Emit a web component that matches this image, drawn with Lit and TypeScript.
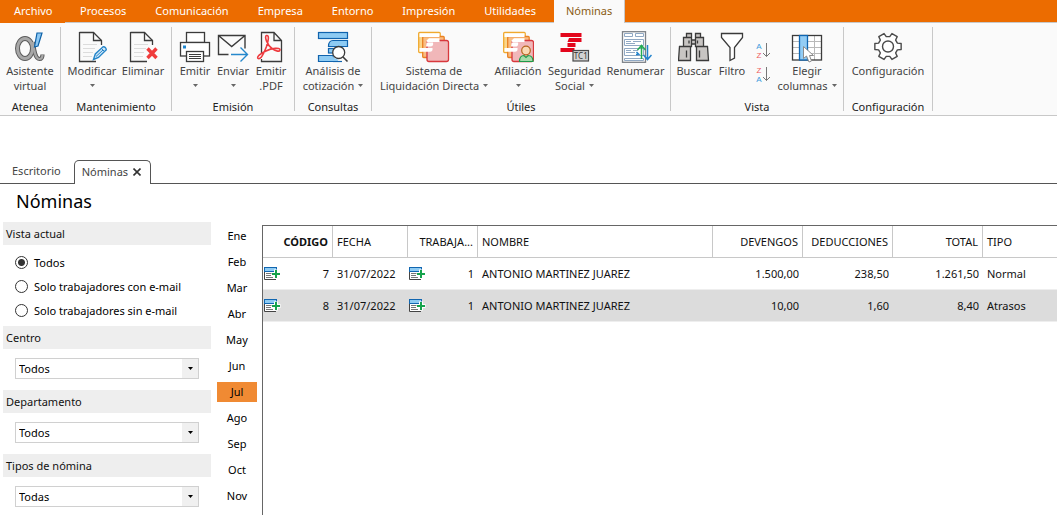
import { LitElement, html, svg, css, nothing, TemplateResult } from "lit";
import { customElement, property, state } from "lit/decorators.js";
import { classMap } from "lit/directives/class-map.js";

/* ---------- icons ---------- */

const ink = "#3b3b3b";
const page = svg`
  <path d="M3.5 1.5H17.5L25.5 9.5V14M3.5 1V30.5H20" fill="none" stroke=${ink} stroke-width="1.3"/>
  <path d="M17.5 1.5V9.5H25.5" fill="none" stroke=${ink} stroke-width="1.3"/>
  <path d="M7 13.5H21M7 17.5H19M7 21.5H17M7 25.5H16" stroke="#dcdcdc"/>`;

const cards = svg`
  <rect x=".7" y="1.5" width="21.5" height="20" rx="1" fill="#fbd68a" stroke="#f0a92e" stroke-width="1.3"/>
  <rect x="4.7" y="5.5" width="21.5" height="21" rx="1" fill="#f9bd83" stroke="#ea8122" stroke-width="1.3"/>
  <rect x="9" y="9.5" width="21.5" height="21" rx="2" fill="#f1b7b9" stroke="#d8383d" stroke-width="1.3"/>
  <path d="M1.5 2.2H21.5V6H1.5ZM11 7.2H21.5V11H10Q8 11 8.500 9.500ZM8.500 11.500H15Q16 15.500 12 15.500H8ZM1.500 17H14.500Q15 20.800 12 20.800H1.500Z" fill="#fff"/>`;

function gearPath(cx: number, cy: number): string {
  const out: string[] = [];
  const ring: [number, number][] = [[-20, 10], [-13, 13.5], [13, 13.5], [20, 10]];
  for (let t = 0; t < 6; t++) {
    for (const [deg, r] of ring) {
      const a = ((t * 60 + deg) * Math.PI) / 180;
      out.push(`${(cx + r * Math.cos(a)).toFixed(2)} ${(cy + r * Math.sin(a)).toFixed(2)}`);
    }
  }
  return "M" + out.join("L") + "Z";
}

const alphaStroke = "M19 11C20 19 21 28 25.5 28C28 28 28.500 26 28.500 23.500";

const icons: Record<string, TemplateResult> = {
  alpha: svg`
    <g fill="none" stroke="#5c5c5c">
      <ellipse cx="11" cy="17.500" rx="7.500" ry="10" stroke-width="5"/>
      <path d=${alphaStroke} stroke-width="4.200"/>
    </g>
    <g fill="none" stroke="#a8a8a8">
      <ellipse cx="11" cy="17.500" rx="7.500" ry="10" stroke-width="3"/>
      <path d=${alphaStroke} stroke-width="2.200"/>
    </g>
    <path d="M23 2H28L24 15L20.500 16Z" fill="#8cc8f4" stroke="#0f62a8" stroke-width="1.200"/>`,
  edit: svg`${page}
    <path d="M17.500 28.500L19.300 23L27 15.800Q30 15.500 30.300 18.800L22.500 26.500Z" fill="#cde6f8" stroke="#2585c9" stroke-width="1.400"/>
    <path d="M25.500 17.500L28.500 20.500M20 25.500L27 19" stroke="#2585c9" fill="none"/>`,
  remove: svg`${page}<path d="M20.500 17.500L29.500 27M29.500 17.500L20.500 27" stroke="#f03c3c" stroke-width="3.400"/>`,
  printer: svg`
    <g fill="#fff" stroke=${ink} stroke-width="1.300">
      <rect x="7.500" y="1.500" width="18" height="10"/>
      <rect x="1.500" y="11.500" width="29" height="13.500"/>
      <rect x="7.500" y="20.500" width="17" height="10"/>
      <path d="M10 23.500H22M10 25.500H22M10 27.500H22" stroke-width="1"/>
    </g>
    <rect x="4" y="14.500" width="3" height="3" fill="#1e86cf"/>`,
  send: svg`
    <path d="M11.500 23.500H1.500V4.500H28V17.500M1.500 4.500L14.700 15.500L28 4.500" fill="none" stroke=${ink} stroke-width="1.400"/>
    <path d="M14 23.500H30M23.500 16.500L30.500 23.500L23.500 30.500" fill="none" stroke="#2688cc" stroke-width="1.400"/>`,
  pdf: svg`
    <path d="M6.500 22V1.500H19L26.500 9.500V30.500H6.500V28M19 1.500V9.500H26.500" fill="none" stroke=${ink} stroke-width="1.300"/>
    <path d="M11.500 4.500C9 5 12 14 17 17.500C21 20.500 25 21 25 18.800C25 16.500 17 17 11 20C5 22.500 1.500 26 3 27.500C5.500 29.500 9.500 21 11.500 15.500C13.500 9.500 14.500 4 11.500 4.500Z" fill="none" stroke="#ee3a3e" stroke-width="1.600"/>`,
  analysis: svg`
    <g fill="#8ecbf3" stroke="#1063ad" stroke-width="1.200">
      <rect x="1.500" y="1.500" width="29" height="6"/>
      <path d="M11.500 15.500C11.500 12 13 9.500 16 9.500H30.500V15.500Z"/>
      <rect x="11.500" y="17.500" width="9" height="4.500"/>
      <path d="M1.500 24.500H16V30.500H1.500Z"/>
      <path d="M16 30.500H25" />
    </g>
    <circle cx="21.700" cy="21.500" r="6" fill="#fff" stroke=${ink} stroke-width="1.300"/>
    <path d="M15 25.100Q17 28 21 28.500V29.900H15Z" fill="#8ecbf3"/>
    <path d="M26 26L30.500 30.500" stroke=${ink} stroke-width="1.600"/>`,
  settlement: cards,
  affiliation: svg`<g transform="translate(1 0)">${cards}</g>
    <path d="M17.500 30.500C17.500 26 20 24.500 22 24.500L24 26.500L26 24.500C29 24.500 31 26.500 31 30.500Z" fill="#a6dba9" stroke="#1f9a49" stroke-width="1.200"/>
    <circle cx="24" cy="19.500" r="4.300" fill="#fad9b4" stroke="#b5651d" stroke-width="1.200"/>`,
  social: svg`
    <path d="M1.500 2H22.500V6H1.500ZM10 7H22.500V11H8.500ZM8.500 12H16.500V16H8.500ZM1.500 17H15.500V21H1.500Z" fill="#e3061c"/>
    <rect x="14" y="19.500" width="15.500" height="10.500" fill="#d2d2d2" stroke="#4a4a4a" stroke-width="1.200"/>
    <text x="21.800" y="28" text-anchor="middle" font-size="8" font-family="Noto Sans, sans-serif" fill="#333">TC1</text>`,
  renumber: svg`
    <rect x="2.500" y=".7" width="23" height="30.600" fill="#fff" stroke="#7d8288" stroke-width="1.300"/>
    <g fill="none" stroke="#91a9c4"><path d="M4.500 2.500H12.500V5.500H4.500ZM15.500 2.500H23.500V5.500H15.500ZM4.500 8.500H23.500V14.500H4.500ZM4.500 17.500H23.500V24.500H4.500ZM4.500 27.500H23.500V29.500H4.500ZM6 10.500H11M13 10.500H21M6 12.500H15M6 19.500H11M13 19.500H18M6 21.500H15"/></g>
    <path d="M21.500 28V15M17.500 19L21.500 14.500L25.500 19" fill="none" stroke="#23ac50" stroke-width="1.500"/>
    <path d="M27.500 14V28M23.500 24L27.500 28.500L31.500 24" fill="none" stroke="#2283cd" stroke-width="1.500"/>
    <path d="M16.500 21L19.500 24M16 23.500H18" stroke="#2283cd" stroke-width="1.500"/>`,
  binoculars: svg`
    <g fill="#c8c5c3" stroke=${ink} stroke-width="1.300">
      <path d="M8.500 2.500H13.500V6.500H8.500ZM17.500 2.500H22.500V6.500H17.500ZM5.500 6.500H13.500V15.500H5.500ZM17.500 6.500H25.500V15.500H17.500ZM13.500 9H17.500V13H13.500ZM1.500 15.500H12.500V29.500H.500ZM18.500 15.500H29.500L30.500 29.500H18.500Z"/>
      <path d="M11 9.500V12.500M19.500 9.500V12.500M8.500 19.500V26.500M21.500 19.500V26.500"/>
    </g>`,
  filter: svg`<path d="M5.500 2.500H26.500V6.500L18.500 16.500V27L14 29.500V16.500L5.500 6.500Z" fill="#fff" stroke=${ink} stroke-width="1.300"/>`,
  columns: svg`
    <rect x="1.500" y="4.500" width="29" height="24.500" fill="#fff"/>
    <path d="M1.500 10.500H30.500M1.500 16.500H30.500M1.500 22.500H30.500M23.500 5V29" stroke="#b9b9b9"/>
    <rect x="1.500" y="4.500" width="29" height="24.500" fill="none" stroke=${ink} stroke-width="1.300"/>
    <rect x="8.500" y="4.500" width="8" height="24.500" fill="#93cdf5" stroke="#0f66b2" stroke-width="1.300"/>
    <path d="M12.500 15.500V27.500L15.500 25L18 31L20.500 30L18.500 24.500H22.500Z" fill="#fff" stroke="#8b8b8b"/>`,
  gear: svg`<path d=${gearPath(16, 15.5)} fill="#fff" stroke="#4a4a4a" stroke-width="1.400" stroke-linejoin="round"/>
    <circle cx="16" cy="15.500" r="5.500" fill="#fff" stroke="#4a4a4a" stroke-width="1.400"/>`,
};

const big = (name: string) => html`<svg class="icon" viewBox="0 0 32 32" aria-hidden="true">${icons[name]}</svg>`;
const caret = html`<svg class="caret" viewBox="0 0 5 3" aria-hidden="true"><path d="M0 0H5L2.500 3Z" fill="currentColor"/></svg>`;

const sortIcon = (top: string, bottom: string) => {
  const tint = (c: string) => (c === "A" ? "#3d9bdc" : "#ee5a60");
  return html`<svg class="sort-icon" viewBox="0 0 16 19" aria-hidden="true">
    <text x="4" y="8" text-anchor="middle" fill=${tint(top)}>${top}</text>
    <text x="4" y="17" text-anchor="middle" fill=${tint(bottom)}>${bottom}</text>
    <path d="M11.500 2V15.500M8 12L11.500 15.500L15 12" fill="none" stroke="#777"/>
  </svg>`;
};

const rowIcon = html`<svg class="row-icon" viewBox="0 0 17 14" aria-hidden="true">
  <path d="M.500 4V12.500H12" fill="#fff" stroke="#444"/>
  <rect x="1" y="5" width="11" height="7" fill="#fff"/>
  <rect x=".500" y=".500" width="12" height="4" fill="#8ecbf3" stroke="#1166b0"/>
  <path d="M2 6.500H9M2 8.500H7M2 10.500H9" stroke="#777"/>
  <path d="M12 2.500V11.500M7.500 7H16.500" stroke="#fff" stroke-width="4"/>
  <path d="M12 3V11M8 7H16" stroke="#16a34c" stroke-width="2"/>
</svg>`;

/* ---------- data ---------- */

interface Action { icon: string; lines: string[]; menu?: boolean; size: string; sort?: boolean }
interface Group { name: string; actions: Action[] }

const menus = ["Procesos", "Comunicación", "Empresa", "Entorno", "Impresión", "Utilidades", "Nóminas"];

const groups: Group[] = [
  { name: "Atenea", actions: [{ icon: "alpha", lines: ["Asistente", "virtual"], size: "s52" }] },
  { name: "Mantenimiento", actions: [
    { icon: "edit", lines: ["Modificar"], menu: true, size: "s54" },
    { icon: "remove", lines: ["Eliminar"], size: "s48" } ] },
  { name: "Emisión", actions: [
    { icon: "printer", lines: ["Emitir"], menu: true, size: "s38" },
    { icon: "send", lines: ["Enviar"], menu: true, size: "s38" },
    { icon: "pdf", lines: ["Emitir", ".PDF"], size: "s38" } ] },
  { name: "Consultas", actions: [{ icon: "analysis", lines: ["Análisis de", "cotización"], menu: true, size: "s68" }] },
  { name: "Útiles", actions: [
    { icon: "settlement", lines: ["Sistema de", "Liquidación Directa"], menu: true, size: "s116" },
    { icon: "affiliation", lines: ["Afiliación"], menu: true, size: "s52" },
    { icon: "social", lines: ["Seguridad", "Social"], menu: true, size: "s61" },
    { icon: "renumber", lines: ["Renumerar"], size: "s61" } ] },
  { name: "Vista", actions: [
    { icon: "binoculars", lines: ["Buscar"], size: "s38" },
    { icon: "filter", lines: ["Filtro"], size: "s38" },
    { icon: "", lines: [], size: "s24", sort: true },
    { icon: "columns", lines: ["Elegir", "columnas"], menu: true, size: "s64" } ] },
  { name: "Configuración", actions: [{ icon: "gear", lines: ["Configuración"], size: "s80" }] },
];

const months = ["Ene", "Feb", "Mar", "Abr", "May", "Jun", "Jul", "Ago", "Sep", "Oct", "Nov"];
const views = ["Todos", "Solo trabajadores con e-mail", "Solo trabajadores sin e-mail"];
const filters = [
  { id: "centro", label: "Centro", value: "Todos" },
  { id: "departamento", label: "Departamento", value: "Todos" },
  { id: "tipos", label: "Tipos de nómina", value: "Todas" },
];

interface Payslip { code: number; date: string; worker: number; name: string; earned: string; deducted: string; total: string; kind: string }
const payslips: Payslip[] = [
  { code: 7, date: "31/07/2022", worker: 1, name: "ANTONIO MARTINEZ JUAREZ", earned: "1.500,00", deducted: "238,50", total: "1.261,50", kind: "Normal" },
  { code: 8, date: "31/07/2022", worker: 1, name: "ANTONIO MARTINEZ JUAREZ", earned: "10,00", deducted: "1,60", total: "8,40", kind: "Atrasos" },
];

const base = css`
  * { box-sizing: border-box; }
  button, select, input { font: inherit; color: inherit; margin: 0; padding: 0; border: 0; background: none; }
`;

/* ---------- ribbon ---------- */

@customElement("app-ribbon")
class AppRibbon extends LitElement {
  static styles = [base, css`
    :host { display: block; font-size: 11px; line-height: 15px; }
    .menu { display: flex; height: 23px; background: #ec6c00; color: #fff; }
    .menu button { padding: 0 14px 2px 15px; white-space: nowrap; }
    .menu .file { width: 65px; padding: 0 16px 2px 14px; }
    .strip { display: flex; flex: 1; border-bottom: 1px solid #c8c8c8; }
    .menu .active { background: #fafafa; color: #8a5c14; margin: 0 0 -1px 4px; padding: 0 12px 2px; border-right: 1px solid #c8c8c8; }
    .groups { display: flex; height: 93px; padding: 4px 0; background: #fafafa; border-bottom: 1px solid #c8c8c8; }
    .group { display: flex; flex-direction: column; padding: 4px 4px 0; border-right: 1px solid #c8c8c8; }
    .actions { display: flex; flex: 1; }
    .action { display: flex; flex-direction: column; align-items: center; color: #444; white-space: nowrap; }
    .icon { width: 32px; height: 32px; flex: none; }
    .line { display: flex; align-items: center; justify-content: center; gap: 4px; height: 15px; }
    .caret { width: 5px; height: 3px; color: #666; }
    .sorts { display: flex; flex-direction: column; gap: 5px; padding-top: 10px; align-items: center; }
    .sorts button { height: 19px; }
    .sort-icon { display: block; width: 16px; height: 19px; overflow: visible; font: 8px "Liberation Sans", sans-serif; }
    .name { height: 12px; text-align: center; color: #222; }
    .s24 { width: 24px; } .s38 { width: 38px; } .s48 { width: 48px; } .s52 { width: 52px; } .s54 { width: 54px; }
    .s61 { width: 61px; } .s64 { width: 64px; } .s68 { width: 68px; } .s80 { width: 80px; } .s116 { width: 116px; }
  `];

  private action(a: Action) {
    if (a.sort) {
      return html`<div class="sorts ${a.size}">
        <button aria-label="Orden ascendente">${sortIcon("A", "Z")}</button>
        <button aria-label="Orden descendente">${sortIcon("Z", "A")}</button>
      </div>`;
    }
    const alone = a.menu && a.lines.length === 1;
    return html`<button class="action ${a.size}">
      ${big(a.icon)}
      ${a.lines.map((t, i) => html`<span class="line">${t}${a.menu && !alone && i === 1 ? caret : nothing}</span>`)}
      ${alone ? html`<span class="line">${caret}</span>` : nothing}
    </button>`;
  }

  render() {
    return html`
      <nav class="menu">
        <button class="file">Archivo</button>
        <div class="strip">${menus.map((m) => html`<button class=${classMap({ active: m === "Nóminas" })}>${m}</button>`)}</div>
      </nav>
      <div class="groups">
        ${groups.map((g) => html`<section class="group">
          <div class="actions">${g.actions.map((a) => this.action(a))}</div>
          <div class="name">${g.name}</div>
        </section>`)}
      </div>`;
  }
}

/* ---------- filters ---------- */

@customElement("filter-panel")
class FilterPanel extends LitElement {
  static styles = [base, css`
    :host { display: block; font-size: 11px; line-height: 15px; }
    .head { display: block; margin: 0; padding: 4px 3px; height: 23px; background: #eee; color: #111; font-size: 11px; font-weight: 400; }
    .views { display: grid; gap: 10px; margin: 0; padding: 10px 12px 9px; }
    .view { display: flex; align-items: center; gap: 6px; height: 14px; white-space: nowrap; }
    .view input { appearance: none; width: 13px; height: 13px; border: 1px solid #333; border-radius: 50%; background: #fff; }
    .view input:checked { background: radial-gradient(circle, #333 0 3px, #fff 4px); }
    .pick { position: relative; margin: 9px 12px 11px; height: 21px; }
    .pick select { appearance: none; width: 100%; height: 21px; padding: 0 20px 0 3px; border: 1px solid #d0d0d0; border-radius: 0; background: linear-gradient(#f0f0f0, #f0f0f0) right / 16px 100% no-repeat #fff; }
    .arrow { position: absolute; right: 6px; top: 9px; width: 5px; height: 3px; pointer-events: none; }
  `];

  render() {
    return html`
      <h2 class="head">Vista actual</h2>
      <div class="views" role="radiogroup" aria-label="Vista actual">
        ${views.map((v, i) => html`<label class="view"><input type="radio" name="view" ?checked=${i === 0}>${v}</label>`)}
      </div>
      ${filters.map((f) => html`
        <label class="head" for=${f.id}>${f.label}</label>
        <div class="pick">
          <select id=${f.id}><option>${f.value}</option></select>
          <svg class="arrow" viewBox="0 0 5 3" aria-hidden="true"><path d="M0 0H5L2.500 3Z"/></svg>
        </div>`)}`;
  }
}

/* ---------- table ---------- */

@customElement("payslip-table")
class PayslipTable extends LitElement {
  @property({ type: Number }) selected = 8;

  static styles = [base, css`
    :host { display: block; border-left: 1px solid #666; border-top: 1px solid #666; font-size: 11px; line-height: 16px; }
    table { width: 100%; table-layout: fixed; border-collapse: separate; border-spacing: 0; }
    th, td { height: 32px; padding: 0 4px; text-align: left; white-space: nowrap; overflow: hidden; font-weight: 400; color: #111; }
    th { border-right: 1px solid #c8c8c8; border-bottom: 1px solid #c8c8c8; text-overflow: ellipsis; }
    th:last-child { border-right: 0; }
    td { border-bottom: 1px solid #eee; }
    .num { text-align: right; }
    .sorted { font-weight: 700; }
    .selected td { background: #dcdcdc; }
    .key { display: flex; align-items: center; justify-content: space-between; }
    .linked { padding-left: 1px; }
    .row-icon { display: block; width: 17px; height: 14px; }
    .w70 { width: 70px; } .w75 { width: 75px; } .w90 { width: 90px; } .name { width: 235px; }
  `];

  private key(n: number) {
    return html`<div class="key"><button aria-label="Abrir ficha">${rowIcon}</button><span>${n}</span></div>`;
  }

  render() {
    return html`<table>
      <colgroup><col class="w70"><col class="w75"><col class="w70"><col class="name"><col class="w90"><col class="w90"><col class="w90"><col></colgroup>
      <thead><tr>
        <th class="num sorted">CÓDIGO</th><th>FECHA</th><th class="num">TRABAJA...</th><th>NOMBRE</th>
        <th class="num">DEVENGOS</th><th class="num">DEDUCCIONES</th><th class="num">TOTAL</th><th>TIPO</th>
      </tr></thead>
      <tbody>${payslips.map((p) => html`<tr class=${classMap({ selected: p.code === this.selected })}>
        <td class="linked">${this.key(p.code)}</td><td>${p.date}</td><td class="linked">${this.key(p.worker)}</td><td>${p.name}</td>
        <td class="num">${p.earned}</td><td class="num">${p.deducted}</td><td class="num">${p.total}</td><td>${p.kind}</td>
      </tr>`)}</tbody>
    </table>`;
  }
}

/* ---------- page ---------- */

@customElement("app-root")
class AppRoot extends LitElement {
  @state() private month = "Jul";

  static styles = [base, css`
    :host { display: flex; flex-direction: column; min-height: 100vh; background: #fff; color: #000; font-family: "Segoe UI", "Noto Sans", "Open Sans", sans-serif; font-size: 11px; line-height: 15px; }
    .tabs { display: flex; margin-top: 44px; height: 24px; border-bottom: 1px solid #555; color: #444; }
    .tabs button { padding: 0 13px 2px 12px; }
    .tabs .current { display: flex; align-items: center; gap: 5px; height: 24px; padding: 0 9px 2px 7px; border: 1px solid #555; border-bottom: 0; border-radius: 5px 5px 0 0; background: #fff; }
    .close { width: 8px; height: 8px; }
    .title { margin: 0; padding: 5px 16px 8px; font-size: 18px; line-height: 25px; font-weight: 400; }
    .work { display: grid; grid-template-columns: 208px 40px 1fr; column-gap: 6px; flex: 1; padding-left: 3px; }
    .work payslip-table { margin: 3px 0 0 -1px; }
    .months { display: flex; flex-direction: column; gap: 6px; padding-top: 4px; }
    .months button { height: 20px; padding-bottom: 2px; }
    .months .on { background: #f08a33; }
  `];

  render() {
    return html`
      <app-ribbon></app-ribbon>
      <div class="tabs">
        <button>Escritorio</button>
        <button class="current">Nóminas
          <svg class="close" viewBox="0 0 8 8" aria-hidden="true"><path d="M.500 .500L7.500 7.500M7.500 .500L.500 7.500" stroke="#333" stroke-width="1.600"/></svg>
        </button>
      </div>
      <h1 class="title">Nóminas</h1>
      <main class="work">
        <filter-panel></filter-panel>
        <div class="months">
          ${months.map((m) => html`<button class=${classMap({ on: m === this.month })} @click=${() => (this.month = m)}>${m}</button>`)}
        </div>
        <payslip-table></payslip-table>
      </main>`;
  }
}
